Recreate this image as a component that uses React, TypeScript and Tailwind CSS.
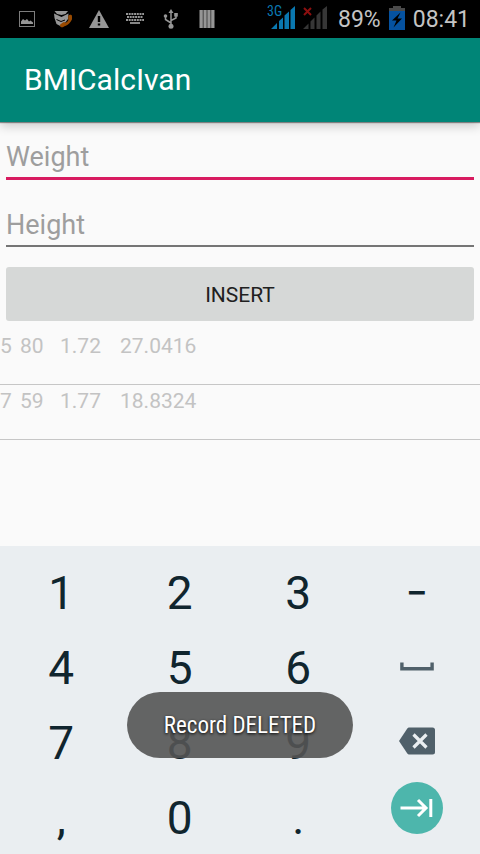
import type { ReactNode } from "react";

const records = [
  { id: "5", weight: "80", height: "1.72", bmi: "27.0416" },
  { id: "7", weight: "59", height: "1.77", bmi: "18.8324" },
];

function NotificationIcons() {
  const slot = "flex w-9 justify-center";
  return (
    <div className="flex items-center pl-[9px] text-[#969696]">
      <span className={slot}>
        <svg width="16" height="16" viewBox="0 0 16 16" fill="none">
          <rect x="0.5" y="0.5" width="15" height="15" stroke="#7d7d7d" strokeWidth="1" />
          <path d="M2 13V10.5L4 8L6 9.5L8 8L10 10.5L11.5 9.6L14 11.5V13Z" fill="currentColor" />
        </svg>
      </span>
      <span className={slot}>
        <svg width="20" height="18" viewBox="0 0 20 18" fill="none">
          <path d="M1.5 1H15L12.5 4L8.5 5L4 4Z" fill="currentColor" />
          <path d="M1 3.5L8.5 7L15.5 3.5L15 9L9 17L3.5 14L1.5 8Z" fill="currentColor" />
          <path d="M3.5 9.5L8 11.5L12 10" stroke="#000" strokeWidth="1" />
          <path d="M17.5 6C18.5 10.5 14 15.5 8.5 15.5" stroke="#994a00" strokeWidth="2.6" strokeLinecap="round" />
          <path d="M17 6.5V9M9 15.5L11 14" stroke="#994a00" strokeWidth="3.6" strokeLinecap="round" />
        </svg>
      </span>
      <span className={slot}>
        <svg width="20" height="18" viewBox="0 0 20 18">
          <path d="M10 0L20 18H0Z" fill="currentColor" />
          <path d="M8.8 6H11.2V12H8.8ZM8.8 13.4H11.2V15.6H8.8Z" fill="#000" />
        </svg>
      </span>
      <span className={slot}>
        <svg width="18" height="12" viewBox="0 0 18 12" fill="none" stroke="currentColor" strokeWidth="1.8">
          <path d="M0 1H18M0 7H18" strokeDasharray="2 0.7" />
          <path d="M1 4H17" strokeDasharray="2 0.7" />
          <path d="M4 10H14" />
        </svg>
      </span>
      <span className={slot}>
        <svg width="16" height="20" viewBox="0 0 16 20" fill="none" stroke="currentColor" strokeWidth="1.5">
          <path d="M8 2V17M8 14L2.5 10.5V8M8 11.5L13 9V6" />
          <path d="M8 0L10.5 4H5.5Z" fill="currentColor" stroke="none" />
          <circle cx="8" cy="17.3" r="2.5" fill="currentColor" stroke="none" />
          <circle cx="2.5" cy="7" r="1.8" fill="currentColor" stroke="none" />
          <rect x="11.2" y="4" width="3.6" height="3.6" fill="currentColor" stroke="none" />
        </svg>
      </span>
      <span className={slot}>
        <svg width="16" height="18" viewBox="0 0 16 18">
          <path d="M0.5 0H15.5V18H0.5Z" fill="currentColor" />
          <path d="M4.2 0V18M8 0V18M11.8 0V18" stroke="#3c3c3c" strokeWidth="0.9" />
        </svg>
      </span>
    </div>
  );
}

function StatusBar() {
  return (
    <header className="flex h-[38px] items-center justify-between bg-black pr-[10px]">
      <NotificationIcons />
      <div className="flex items-center text-[23px] leading-none text-[#c4c4c4]">
        <svg className="mr-2 mb-[3px] overflow-visible font-['Roboto_Condensed',Roboto,sans-serif]" width="28" height="23" viewBox="0 0 28 23">
          <path d="M4 23L10 17V23ZM12 15L16 11.5V23H12ZM17.5 9.5L22 5.5V23H17.5ZM23.5 4L28 0V23H23.5Z" fill="#0a78b0" />
          <text x="0" y="10" fontSize="14" fill="#0a78b0">3G</text>
        </svg>
        <svg className="mr-[11px] mb-[3px]" width="24" height="23" viewBox="0 0 24 23">
          <path d="M0 23L5.5 17.5V23ZM7.5 15.5L11.5 11.5V23H7.5ZM13.5 9.5L17.5 5.5V23H13.5ZM19.5 3.5L24 0V23H19.5Z" fill="#363636" />
          <path d="M1 2L8 9M8 2L1 9" stroke="#000" strokeWidth="5" />
          <path d="M1 2L8 9M8 2L1 9" stroke="#8c0f0f" strokeWidth="2" />
        </svg>
        <span className="mr-2">89%</span>
        <svg className="mr-2 mb-[3px]" width="16" height="24" viewBox="0 0 16 24">
          <path d="M4 0H12V2H16V6H0V2H4Z" fill="#4a4a4a" />
          <path d="M0 5H16V24H0Z" fill="#0552a0" />
          <path d="M11.5 6.5L3 14.5H7.5L4.5 21.5L13 12.5H8.5Z" fill="#000" />
        </svg>
        <time>08:41</time>
      </div>
    </header>
  );
}

function Field({ id, label, line }: { id: string; label: string; line: string }) {
  return (
    <div className="px-[6px]">
      <label htmlFor={id} className="sr-only">{label}</label>
      <input
        id={id}
        inputMode="decimal"
        placeholder={label}
        className={`block w-full bg-transparent pb-[2px] text-[27px] leading-9 outline-none placeholder:text-[#9e9e9e] ${line}`}
      />
    </div>
  );
}

function Key({ children }: { children: ReactNode }) {
  return (
    <button type="button" className="flex h-[75px] items-center justify-center">
      {children}
    </button>
  );
}

function IconKey({ label, children }: { label: string; children: ReactNode }) {
  return (
    <button type="button" aria-label={label} className="flex h-[75px] items-center justify-center pb-[3px]">
      {children}
    </button>
  );
}

function Keypad() {
  return (
    <div className="grid h-[308px] grid-cols-4 overflow-hidden bg-[#eaeef1] pt-[9px] pr-1 pl-[2px] text-[46px] leading-none text-[#10252e]">
      <Key>1</Key>
      <Key>2</Key>
      <Key>3</Key>
      <Key>
        <span className="text-[38px] font-medium">−</span>
      </Key>
      <Key>4</Key>
      <Key>5</Key>
      <Key>6</Key>
      <IconKey label="Space">
        <svg width="34" height="9" viewBox="0 0 34 9" fill="none" stroke="#50606a" strokeWidth="3.4">
          <path d="M1.9 0.5V6.7H32.1V0.5" />
        </svg>
      </IconKey>
      <Key>7</Key>
      <Key>8</Key>
      <Key>9</Key>
      <IconKey label="Backspace">
        <svg width="36" height="28" viewBox="0 0 36 28">
          <path d="M10 0.5H33.5Q36 0.5 36 3V25Q36 27.5 33.5 27.5H10Q9 27.5 8.3 26.5L0 14L8.3 1.5Q9 0.5 10 0.5Z" fill="#50606a" />
          <path d="M14.5 7.5L27.5 20.5M27.5 7.5L14.5 20.5" stroke="#eaeef1" strokeWidth="3.2" />
        </svg>
      </IconKey>
      <Key>,</Key>
      <Key>0</Key>
      <Key>.</Key>
      <button type="button" aria-label="Next" className="flex h-14 items-center justify-center self-start">
        <svg width="52" height="52" viewBox="0 0 52 52" fill="none" stroke="#fff" strokeWidth="3">
          <circle cx="26" cy="26" r="26" fill="#4db6ac" stroke="none" />
          <path d="M9.5 26H35M27 18L35 26L27 34M39.8 17V35" />
        </svg>
      </button>
    </div>
  );
}

export default function App() {
  return (
    <div className="relative flex min-h-screen flex-col bg-[#fafafa] font-[Roboto,sans-serif]">
      <StatusBar />
      <div className="z-10 flex h-[84px] items-center bg-[#008577] px-6 shadow-[0_1px_1px_rgba(0,0,0,0.4),0_4px_10px_rgba(0,0,0,0.2)]">
        <h1 className="text-[30px] leading-9 text-white">BMICalcIvan</h1>
      </div>
      <main className="flex-1">
        <form className="pt-[17px]">
          <Field id="weight" label="Weight" line="border-b-3 border-[#d81b60]" />
          <div className="pt-[27px]">
            <Field id="height" label="Height" line="border-b-2 border-[#757575]" />
          </div>
          <div className="px-[6px] pt-5">
            <button type="button" className="h-[54px] w-full rounded-[3px] bg-[#d6d8d7] pt-[3px] text-[21px] text-[#212121]">
              INSERT
            </button>
          </div>
        </form>
        <table className="mt-[9px] w-full table-fixed border-separate border-spacing-0 text-left text-[21px] leading-8 text-[#c3c3c3] [&_td]:border-b [&_td]:border-[#c6c6c6]">
          <colgroup>
            <col className="w-5" />
            <col className="w-10" />
            <col className="w-[60px]" />
            <col />
          </colgroup>
          <tbody>
            {records.map((r) => (
              <tr key={r.id} className="h-[55px] align-top">
                <td>{r.id}</td>
                <td>{r.weight}</td>
                <td>{r.height}</td>
                <td>{r.bmi}</td>
              </tr>
            ))}
          </tbody>
        </table>
      </main>
      <Keypad />
      <div
        role="status"
        className="absolute bottom-24 left-1/2 flex h-[66px] w-[226px] -translate-x-1/2 items-center justify-center rounded-full bg-[#545454]/90 pt-[3px] font-['Roboto_Condensed',Roboto,sans-serif] text-[23px] whitespace-nowrap text-white [text-shadow:0_1px_3px_#000]"
      >
        Record DELETED
      </div>
    </div>
  );
}
